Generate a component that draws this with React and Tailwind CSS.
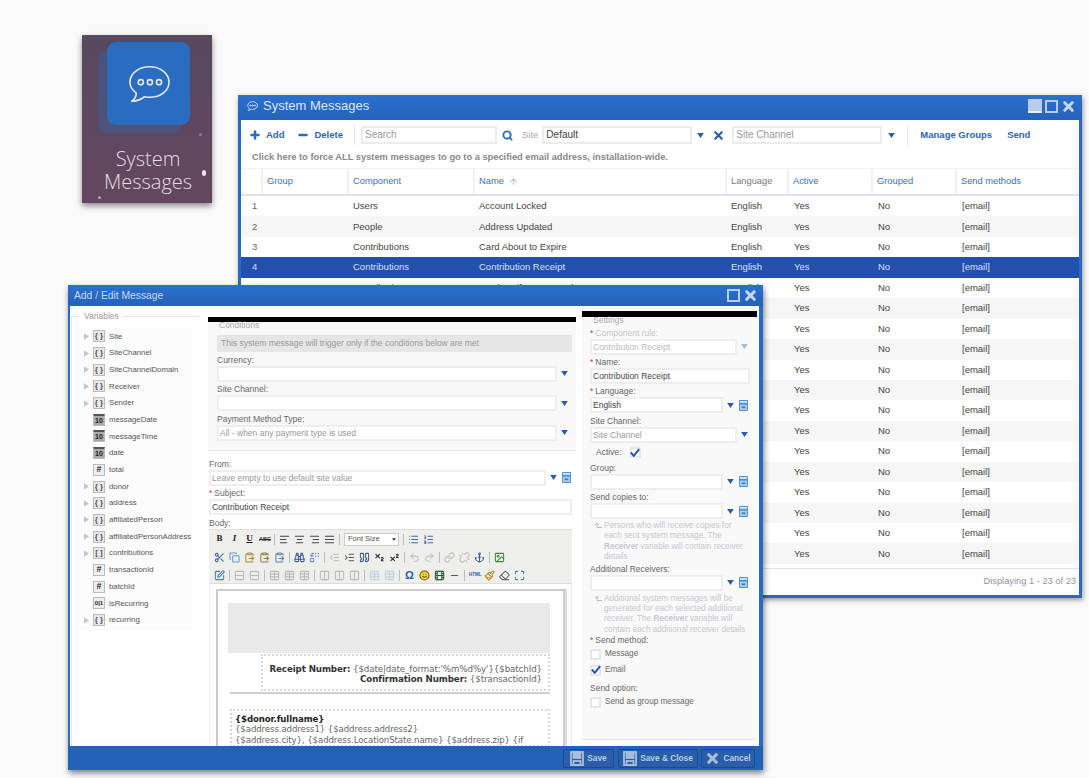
import React from 'react';
import {
  Anchor, AlignCenter, AlignJustify, AlignLeft, AlignRight, ArrowUp, Binoculars, ClipboardPaste, Columns2, Copy, Eraser, Film,
  Image, Indent, Link, List, ListOrdered, Maximize, Minus, Outdent, Paintbrush, Plus, Quote, Redo2, Replace, Rows2, Scissors,
  Search, Smile, SquarePen, Subscript, Superscript, Table, Undo2, Unlink, X,
} from 'lucide-react';

const font = "font-['Liberation_Sans',Arial,sans-serif]";

const ROWS = [
  ['Users', 'Account Locked'],
  ['People', 'Address Updated'],
  ['Contributions', 'Card About to Expire'],
  ['Contributions', 'Contribution Receipt'],
  ['Contributions', 'Card Notify Not Found'],
  ['Users', 'Forgot Password'],
  ['Users', 'New Account'],
  ['Users', 'Password Changed'],
  ['Events', 'Event Registration'],
  ['Events', 'Event Reminder'],
  ['Contributions', 'Pledge Reminder'],
  ['Contributions', 'Recurring Failed'],
  ['Contributions', 'Recurring Receipt'],
  ['People', 'Profile Updated'],
  ['People', 'Welcome'],
  ['Users', 'Username Reminder'],
  ['Events', 'Event Cancelled'],
  ['Events', 'Event Waitlist'],
];

const VARS = [
  ['Site', 'obj'], ['SiteChannel', 'obj'], ['SiteChannelDomain', 'obj'], ['Receiver', 'obj'], ['Sender', 'obj'],
  ['messageDate', 'date'], ['messageTime', 'date'], ['date', 'date'], ['total', 'num'], ['donor', 'obj'], ['address', 'obj'],
  ['affiliatedPerson', 'obj'], ['affiliatedPersonAddress', 'obj'], ['contributions', 'arr'], ['transactionId', 'num'],
  ['batchId', 'num'], ['isRecurring', 'bool'], ['recurring', 'obj'],
];

const Arrow = ({ className = '' }) => (
  <svg viewBox="0 0 8 6" className={`w-[7px] h-[5px] shrink-0 ${className}`}><path d="M0 0h8L4 6z" fill="#2a5cab" /></svg>
);

// little floppy / database button that sits beside the combos
const PickIcon = () => (
  <svg viewBox="0 0 10 12" className="w-[9px] h-[11px] shrink-0">
    <rect width="10" height="12" rx="1" fill="#4a90d6" />
    <rect x="1" y="1" width="8" height="2" fill="#d8e8f8" />
    <rect x="1" y="5" width="8" height="6" fill="#a9cdf0" />
    <rect x="3" y="7" width="4" height="2" fill="#3d7cc0" />
  </svg>
);

const SaveIcon = ({ className = '' }) => (
  <svg viewBox="0 0 14 15" className={`w-[14px] h-[15px] shrink-0 ${className}`} fill="none" stroke="#a9bedc" strokeWidth="1.8">
    <rect x="1" y="1" width="12" height="13" />
    <rect x="3.500" y="1" width="7" height="6" fill="#a9bedc" />
    <rect x="3.500" y="10" width="7" height="4" />
  </svg>
);

const TitleControls = ({ full = true }) => (
  <div className="flex items-center gap-[3px]">
    {full && <div className="w-[14px] h-[14px] bg-[#b9cdea] border-b-2 border-[#e6eef9]" />}
    <div className="w-[13px] h-[13px] border-2 border-[#b9cdea]" />
    <X size={15} strokeWidth={5} className="text-[#c4d5ee]" />
  </div>
);

const Bubble = ({ className = '', stroke = 'currentColor', width = 2 }) => (
  <svg viewBox="0 0 48 44" className={className} fill="none" stroke={stroke} strokeWidth={width} strokeLinejoin="round">
    <path d="M25 3C13 3 3 10 3 20c0 5 3 9 7 12 0 3-2 7-5 9 5 0 10-2 14-5 2 .4 4 .6 6 .6 12 0 21-7.500 21-16.600S37 3 25 3z" />
    <circle cx="15" cy="20" r="2.800" /><circle cx="25" cy="20" r="2.800" /><circle cx="35" cy="20" r="2.800" />
  </svg>
);

const AppTile = () => (
  <div className="absolute left-[82px] top-[35px] w-[130px] h-[168px] bg-gradient-to-b from-[#57495f] to-[#64475f] shadow-[0_3px_6px_rgba(0,0,0,0.45)] flex flex-col items-center overflow-hidden">
    <div className="relative mt-[7px] ml-[3px] w-[83px] h-[83px] rounded-[9px] bg-[#2a6cc0] flex items-center justify-center shadow-[-9px_9px_0_rgba(50,100,170,0.4)]">
      <Bubble className="w-[44px] h-[40px]" stroke="#dfe8f4" width={1.800} />
    </div>
    <div className="mt-[22px] ml-[2px] text-center text-[#e4dfe4] text-[20px] leading-[23px] font-['Open_Sans',sans-serif] font-light">
      <div>System</div>
      <div>Messages</div>
    </div>
    <div className="absolute left-[120px] top-[135px] w-[4px] h-[6px] rounded-full bg-[#e8e4e8]" />
    <div className="absolute left-[117px] top-[98px] w-[3px] h-[3px] rounded-full bg-[#8d7d90]" />
    <div className="absolute left-[16px] top-[161px] w-[3px] h-[3px] rounded-full bg-[#b0a2b2]" />
  </div>
);

const TBox = ({ className = '', children }) => (
  <div className={`h-[18px] bg-white border-2 border-[#ececec] pl-[2px] text-[10px] leading-[14px] flex items-center ${className}`}>{children}</div>
);

const TopToolbar = () => (
  <div className="h-[28px] shrink-0 flex items-center text-[9.500px] font-bold text-[#2a66b4] pl-[8px] pt-[2px]">
    <Plus size={12} strokeWidth={5} className="text-[#2a6cb8]" />
    <span className="ml-[5px]">Add</span>
    <Minus size={12} strokeWidth={5} className="ml-[13px] text-[#2a6cb8]" />
    <span className="ml-[5px]">Delete</span>
    <div className="w-px h-[20px] bg-[#e8e8e8] ml-[11px]" />
    <TBox className="w-[136px] ml-[6px] font-normal text-[#999]">Search</TBox>
    <Search size={11} strokeWidth={4} className="ml-[5px] text-[#2a6cb8]" />
    <span className="ml-[9px] font-normal text-[#aaa]">Site</span>
    <TBox className="w-[150px] ml-[4px] font-normal text-[#444]">Default</TBox>
    <Arrow className="ml-[5px]" />
    <X size={13} strokeWidth={4} className="ml-[8px] text-[#2a5cab]" />
    <TBox className="w-[150px] ml-[7px] font-normal text-[#999]">Site Channel</TBox>
    <Arrow className="ml-[6px]" />
    <div className="w-px h-[20px] bg-[#e8e8e8] ml-[12px]" />
    <span className="ml-[12px]">Manage Groups</span>
    <span className="ml-[15px]">Send</span>
  </div>
);

const gridCols = 'grid grid-cols-[20px_86px_126px_252px_62px_84px_84px_1fr]';

const HeadCell = ({ children, gray, sort }) => (
  <div className={`h-full border-l-2 border-[#eef0f3] flex items-center pl-[4px] gap-[5px] ${gray ? 'text-[#777]' : 'text-[#3b6cc4]'}`}>
    {children}
    {sort && <ArrowUp size={9} strokeWidth={3.500} className="text-[#c4c8cc]" />}
  </div>
);

const MainWindow = () => (
  <div className={`absolute left-[238px] top-[95px] w-[844px] h-[503px] flex flex-col bg-[#2a6ac6] shadow-[1px_2px_5px_rgba(0,0,0,0.4)] ${font}`}>
    <div className="h-[25px] shrink-0 flex items-center pl-[9px] pr-[6px] pb-[3px] bg-gradient-to-b from-[#2b70d0] to-[#2562b9] text-[#dce7f6]">
      <Bubble className="w-[11px] h-[10px]" stroke="#cfdcf0" width={4} />
      <span className="ml-[5px] text-[13px]">System Messages</span>
      <div className="flex-1" />
      <TitleControls />
    </div>
    <div className="flex-1 mx-[3px] mb-[3px] bg-white flex flex-col min-h-0">
      <TopToolbar />
      <div className="h-[20px] shrink-0 pl-[11px] flex items-center text-[9.300px] font-bold text-[#888]">
        Click here to force ALL system messages to go to a specified email address, installation-wide.
      </div>
      <div className={`${gridCols} h-[28px] shrink-0 border-t border-[#eef2f6] border-b-2 border-b-[#dde2e8] text-[9.300px]`}>
        <div />
        <HeadCell>Group</HeadCell>
        <HeadCell>Component</HeadCell>
        <HeadCell sort>Name</HeadCell>
        <HeadCell gray>Language</HeadCell>
        <HeadCell>Active</HeadCell>
        <HeadCell>Grouped</HeadCell>
        <HeadCell>Send methods</HeadCell>
      </div>
      <div className="flex-1 min-h-0 text-[9.500px] text-[#444]">
        {ROWS.map(([component, name], i) => (
          <div key={i} className={`${gridCols} h-[20.450px] items-center ${i === 3 ? 'bg-[#2350ad] text-[#d7e1f5]' : i % 2 ? 'bg-[#f6f6f6]' : 'bg-white'}`}>
            <div className={`pl-[11px] ${i === 3 ? '' : 'text-[#666]'}`}>{i + 1}</div>
            <div />
            <div className="pl-[6px]">{component}</div>
            <div className="pl-[6px]">{name}</div>
            <div className="pl-[6px]">English</div>
            <div className="pl-[7px]">Yes</div>
            <div className="pl-[7px]">No</div>
            <div className="pl-[7px]">[email]</div>
          </div>
        ))}
      </div>
      <div className="h-[27px] shrink-0 border-t border-[#dde2e8] flex items-center justify-end pr-[3px] text-[9.300px] text-[#8b95a3]">
        Displaying 1 - 23 of 23
      </div>
    </div>
  </div>
);

const VarIcon = ({ type }) => {
  const base = 'w-[12px] h-[12px] shrink-0 border border-[#bbb] flex items-center justify-center font-bold leading-none';
  if (type === 'date') return <div className={`${base} bg-[#aaa] border-t-2 border-t-[#555] text-[7px] text-[#222]`}>10</div>;
  if (type === 'num') return <div className={`${base} bg-[#f0f0f0] text-[9px] text-[#222]`}>#</div>;
  if (type === 'bool') return <div className={`${base} bg-[#eee] text-[6px] text-[#222]`}>0|1</div>;
  return <div className={`${base} bg-[#e8e8e8] text-[8px] text-[#555]`}>{type === 'arr' ? '[ ]' : '{ }'}</div>;
};

const VariablesPanel = () => (
  <div className="w-[128px] shrink-0 relative mt-[10px] ml-[1px] border-t border-l border-[#e4e4e4] pt-[11px] pl-[7px]">
    <div className="absolute left-[8px] -top-[6px] bg-white px-[4px] text-[8.500px] leading-[11px] text-[#999]">Variables</div>
    <div className="w-[113px] h-[302px] bg-[#fcfcfc] pl-[5px]">
      {VARS.map(([name, type]) => (
        <div key={name} className="h-[16.700px] flex items-center text-[7.800px] text-[#555] whitespace-nowrap">
          <div className="w-[9px] shrink-0">
            {(type === 'obj' || type === 'arr') && (
              <svg viewBox="0 0 6 8" className="w-[5px] h-[7px]"><path d="M0 0l6 4-6 4z" fill="#c2c6cc" /></svg>
            )}
          </div>
          <VarIcon type={type} />
          <span className="ml-[4px]">{name}</span>
        </div>
      ))}
    </div>
  </div>
);

// label + bordered box; inset fields and combos all share this
const Field = ({ label, required, value, placeholder, arrow, pick, disabled, className = '', width = '' }) => (
  <div className={className}>
    <div className={`h-[11px] leading-[11px] text-[8.500px] ${disabled ? 'text-[#c4c4c4]' : 'text-[#666]'}`}>
      {required && <span className="text-[#e03030] mr-[2px]">*</span>}{label}
    </div>
    <div className="flex items-center">
      <div className={`h-[16px] shrink-0 border-2 border-[#eee] bg-white pl-px text-[8.500px] leading-[12px] flex items-center whitespace-nowrap overflow-hidden ${width} ${value ? (disabled ? 'text-[#bbb]' : 'text-[#444]') : 'text-[#999]'}`}>
        {value || placeholder}
      </div>
      {arrow && <Arrow className={`ml-[4px] ${disabled ? 'opacity-40' : ''}`} />}
      {pick && <span className="ml-[5px]"><PickIcon /></span>}
    </div>
  </div>
);

const Sep = () => <div className="w-px h-[11px] bg-[#bbb] shrink-0" />;

const Ed = ({ icon: Icon, color = '#445', faded, fill = 'none' }) => (
  <Icon size={11} strokeWidth={2.200} color={color} fill={fill} className={`shrink-0 ${faded ? 'opacity-30' : ''}`} />
);

const EditorToolbar = () => (
  <div className="h-[55px] shrink-0 bg-[#eeeeea] border-t border-[#ddd] border-b border-b-[#ddd] pl-[5px] pt-[2px] flex flex-col gap-[3px]">
    <div className="h-[15px] flex items-center gap-[4px]">
      <span className="w-[11px] text-center text-[9px] font-bold font-['Liberation_Serif',serif] text-[#222]">B</span>
      <span className="w-[11px] text-center text-[9px] font-bold italic font-['Liberation_Serif',serif] text-[#222]">I</span>
      <span className="w-[11px] text-center text-[9px] font-bold underline font-['Liberation_Serif',serif] text-[#222]">U</span>
      <span className="w-[11px] text-center text-[5.500px] font-bold line-through text-[#333]">ABC</span>
      <Sep />
      <Ed icon={AlignLeft} /><Ed icon={AlignCenter} /><Ed icon={AlignRight} /><Ed icon={AlignJustify} />
      <Sep />
      <div className="w-[55px] h-[13px] bg-white border border-[#ccc] text-[7.500px] pl-[3px] flex items-center justify-between text-[#555]">
        Font Size
        <svg viewBox="0 0 6 4" className="w-[4px] h-[3px] mr-[2px]"><path d="M0 0h6L3 4z" fill="#333" /></svg>
      </div>
      <Sep />
      <Ed icon={List} color="#456a9c" /><Ed icon={ListOrdered} color="#456a9c" />
    </div>
    <div className="h-[15px] flex items-center gap-[4px]">
      <Ed icon={Scissors} color="#3a66a8" /><Ed icon={Copy} color="#6a94cc" /><Ed icon={ClipboardPaste} color="#a98b2e" />
      <Ed icon={ClipboardPaste} color="#8a7a3e" /><Ed icon={ClipboardPaste} color="#5a7fa8" />
      <Sep />
      <Ed icon={Binoculars} color="#3a5c90" /><Ed icon={Replace} color="#6a94cc" />
      <Sep />
      <Ed icon={Outdent} faded /><Ed icon={Indent} color="#556" /><Ed icon={Quote} color="#3a5c90" />
      <Ed icon={Subscript} color="#223" /><Ed icon={Superscript} color="#223" />
      <Sep />
      <Ed icon={Undo2} color="#3a66a8" faded /><Ed icon={Redo2} color="#3a66a8" faded />
      <Sep />
      <Ed icon={Link} faded /><Ed icon={Unlink} faded /><Ed icon={Anchor} color="#3a5c90" />
      <Sep />
      <Ed icon={Image} color="#3f8a3a" />
    </div>
    <div className="h-[15px] flex items-center gap-[4px]">
      <Ed icon={SquarePen} color="#4a7ab8" />
      <Sep />
      <Ed icon={Rows2} faded /><Ed icon={Rows2} faded />
      <Sep />
      <Ed icon={Table} faded /><Ed icon={Table} faded /><Ed icon={Table} faded />
      <Sep />
      <Ed icon={Columns2} faded /><Ed icon={Columns2} faded /><Ed icon={Columns2} faded />
      <Sep />
      <Ed icon={Table} color="#6a94cc" faded /><Ed icon={Table} color="#6a94cc" faded />
      <Sep />
      <span className="w-[11px] text-center text-[11px] leading-none font-bold text-[#2a5cab]">Ω</span>
      <Ed icon={Smile} color="#6b5a00" fill="#f4d23c" />
      <Ed icon={Film} color="#2d5a3a" />
      <Ed icon={Minus} color="#2a5cab" />
      <Sep />
      <span className="w-[11px] text-center text-[4.500px] font-bold text-[#2a5cab]">HTML</span>
      <Ed icon={Paintbrush} color="#b98a20" /><Ed icon={Eraser} color="#667" /><Ed icon={Maximize} color="#4a7ab8" />
    </div>
  </div>
);

const EditorBody = () => (
  <div className="flex-1 min-h-0 px-[6px] pt-[5px] overflow-hidden border-l border-r border-[#eee]">
    <div className="h-[200px] border-2 border-[#ccc] border-b-0 bg-white pt-[12px] pl-[10px] pr-[13px] shadow-[2px_0_0_#ddd]">
      <div className="h-[50px] bg-[#e9e9e9]" />
      <div className="ml-[33px] mt-px h-[37px] border-2 border-dotted border-[#d8d8d8] flex flex-col justify-center items-end pr-[6px] pt-[4px] text-[8.700px] leading-[10.500px] text-[#666] font-['DejaVu_Sans',sans-serif] whitespace-nowrap tracking-[-0.1px]">
        <div><b className="text-[#333]">Receipt Number:</b> {"{$date|date_format:'%m%d%y'}{$batchId}"}</div>
        <div><b className="text-[#333]">Confirmation Number:</b> {'{$transactionId}'}</div>
      </div>
      <div className="h-[2px] bg-[#cfcfcf] mt-px ml-[2px]" />
      <div className="mt-[15px] ml-[2px] border-2 border-dotted border-[#d8d8d8] pl-[3px] pt-[3px] text-[8.600px] leading-[10.500px] text-[#666] font-['DejaVu_Sans',sans-serif] whitespace-nowrap tracking-[-0.1px]">
        <div className="font-bold text-[#222]">{'{$donor.fullname}'}</div>
        <div>{'{$address.address1} {$address.address2}'}</div>
        <div>{'{$address.city}, {$address.LocationState.name} {$address.zip} {if'}</div>
      </div>
    </div>
  </div>
);

const CenterPanel = () => (
  <div className="w-[368px] shrink-0 ml-[9px] mt-[11px] flex flex-col min-h-0">
    <div className="h-[5px] shrink-0 bg-black" />
    <div className="shrink-0 h-[129px] bg-[#f8f8f8] border-b border-[#e6e6e6] pl-[9px] pr-[4px] relative">
      <div className="absolute left-[11px] -top-[2px] text-[8.500px] leading-[10px] text-[#aaa]">Conditions</div>
      <div className="mt-[13px] h-[17px] bg-[#e6e6e6] text-[8.500px] text-[#999] flex items-center pl-[4px] mb-[2.500px]">
        This system message will trigger only if the conditions below are met
      </div>
      <Field label="Currency:" arrow width="w-[340px]" className="mb-[2.500px]" />
      <Field label="Site Channel:" arrow width="w-[340px]" className="mb-[2.500px]" />
      <Field label="Payment Method Type:" placeholder="All - when any payment type is used" arrow width="w-[340px]" />
    </div>
    <div className="shrink-0 pl-[1px] pt-[7.500px]">
      <Field label="From:" placeholder="Leave empty to use default site value" arrow pick width="w-[337px]" className="mb-[2px]" />
      <Field label="Subject:" required value="Contribution Receipt" width="w-[363px]" className="mb-[3px]" />
      <div className="h-[11px] leading-[11px] text-[8.500px] text-[#666]">Body:</div>
    </div>
    <div className="flex-1 min-h-0 ml-[1px] mr-[4px] flex flex-col">
      <EditorToolbar />
      <EditorBody />
    </div>
  </div>
);

const Hint = ({ children, className = '' }) => (
  <div className={`flex text-[8.200px] leading-[10.300px] text-[#c5c8d0] pl-[4px] ${className}`}>
    <svg viewBox="0 0 8 6" className="w-[8px] h-[6px] mt-[1px] mr-[1px] shrink-0" fill="none" stroke="#b8bcc6"><path d="M3 5.500V1M1 3l2-2 2 2M3 5.500h5" /></svg>
    <div className="ml-[1px]">{children}</div>
  </div>
);

const Check = ({ checked, label }) => (
  <div className="flex items-center text-[8.200px] text-[#666]">
    <div className="w-[11px] h-[11px] bg-white border-2 border-[#e6e6e6] rounded-[1px] shrink-0 flex items-center justify-center">
      {checked && (
        <svg viewBox="0 0 12 10" className="w-[10px] h-[9px] -mt-px shrink-0"><path d="M1 5l3.500 4L11 1" fill="none" stroke="#2558b0" strokeWidth="2.400" /></svg>
      )}
    </div>
    {label && <span className="ml-[4px]">{label}</span>}
  </div>
);

const SettingsPanel = () => (
  <div className="w-[175px] shrink-0 ml-[6px] mt-[5px] bg-[#f9f9f9] flex flex-col min-h-0">
    <div className="h-[6px] shrink-0 bg-black" />
    <div className="relative flex-1 pl-[8px] pt-[10.500px]">
      <div className="absolute left-[11px] -top-[2px] text-[8.500px] leading-[10px] text-[#aaa]">Settings</div>
      <Field label="Component rule:" required disabled value="Contribution Receipt" arrow width="w-[147px]" className="mb-[2px]" />
      <Field label="Name:" required value="Contribution Receipt" width="w-[160px]" className="mb-[2.500px]" />
      <Field label="Language:" required value="English" arrow pick width="w-[133px]" className="mb-[2.500px]" />
      <Field label="Site Channel:" placeholder="Site Channel" arrow width="w-[147px]" />
      <div className="flex items-center h-[20px] text-[8.500px] text-[#666] pl-[6px]">
        <span className="mr-[8px]">Active:</span>
        <Check checked />
      </div>
      <Field label="Group:" arrow pick width="w-[133px]" className="mb-[2.500px]" />
      <Field label="Send copies to:" arrow pick width="w-[133px]" />
      <Hint className="mt-[2px] mb-[1.500px] pr-[6px]">Persons who will receive copies for each sent system message. The <b>Receiver</b> variable will contain receiver details</Hint>
      <Field label="Additional Receivers:" arrow pick width="w-[133px]" />
      <Hint className="mt-[3px] pr-[6px]">Additional system messages will be generated for each selected additional receiver. The <b>Receiver</b> variable will contain each additional receiver details</Hint>
      <div className="h-[11px] mt-[0.500px] mb-[1.500px] leading-[11px] text-[8.500px] text-[#666]"><span className="text-[#e03030] mr-[2px]">*</span>Send method:</div>
      <Check label="Message" />
      <div className="mt-[4px]"><Check checked label="Email" /></div>
      <div className="h-[11px] mt-[7px] mb-[2px] leading-[11px] text-[8.500px] text-[#666]">Send option:</div>
      <Check label="Send as group message" />
    </div>
    <div className="h-[7px] shrink-0 border-t border-[#e6e6e6] bg-white" />
  </div>
);

const FootButton = ({ icon, children, className = '' }) => (
  <div className={`h-[19px] flex items-center justify-center gap-[3px] rounded-[2px] bg-[#2a5ea8] border border-[#1d4a8c] text-[8.300px] font-bold text-[#b9cde8] ${className}`}>
    {icon}
    {children}
  </div>
);

const EditDialog = () => (
  <div className={`absolute left-[68px] top-[285px] w-[695px] h-[485px] flex flex-col bg-[#2a6ac6] shadow-[1px_3px_6px_rgba(0,0,0,0.5)] ${font}`}>
    <div className="h-[21px] shrink-0 flex items-center pl-[6px] pr-[5px] bg-gradient-to-b from-[#2b70d0] to-[#2562b9] text-[#c8d8f0]">
      <span className="text-[10.300px]">Add / Edit Message</span>
      <div className="flex-1" />
      <TitleControls full={false} />
    </div>
    <div className="flex-1 min-h-0 ml-[2px] mr-[4px] bg-white flex overflow-hidden">
      <VariablesPanel />
      <CenterPanel />
      <SettingsPanel />
    </div>
    <div className="h-[24px] shrink-0 bg-[#2462ba] flex items-center justify-end pr-[8px]">
      <FootButton icon={<SaveIcon />} className="w-[51px]">Save</FootButton>
      <FootButton icon={<SaveIcon />} className="w-[80px] ml-[4px]">Save &amp; Close</FootButton>
      <FootButton icon={<X size={15} strokeWidth={5} className="text-[#a9bedc]" />} className="w-[54px] ml-[3px]">Cancel</FootButton>
    </div>
  </div>
);

export default function App() {
  return (
    <div className="relative w-[1089px] h-[778px] bg-[#fafafa] overflow-hidden">
      <AppTile />
      <MainWindow />
      <EditDialog />
    </div>
  );
}
